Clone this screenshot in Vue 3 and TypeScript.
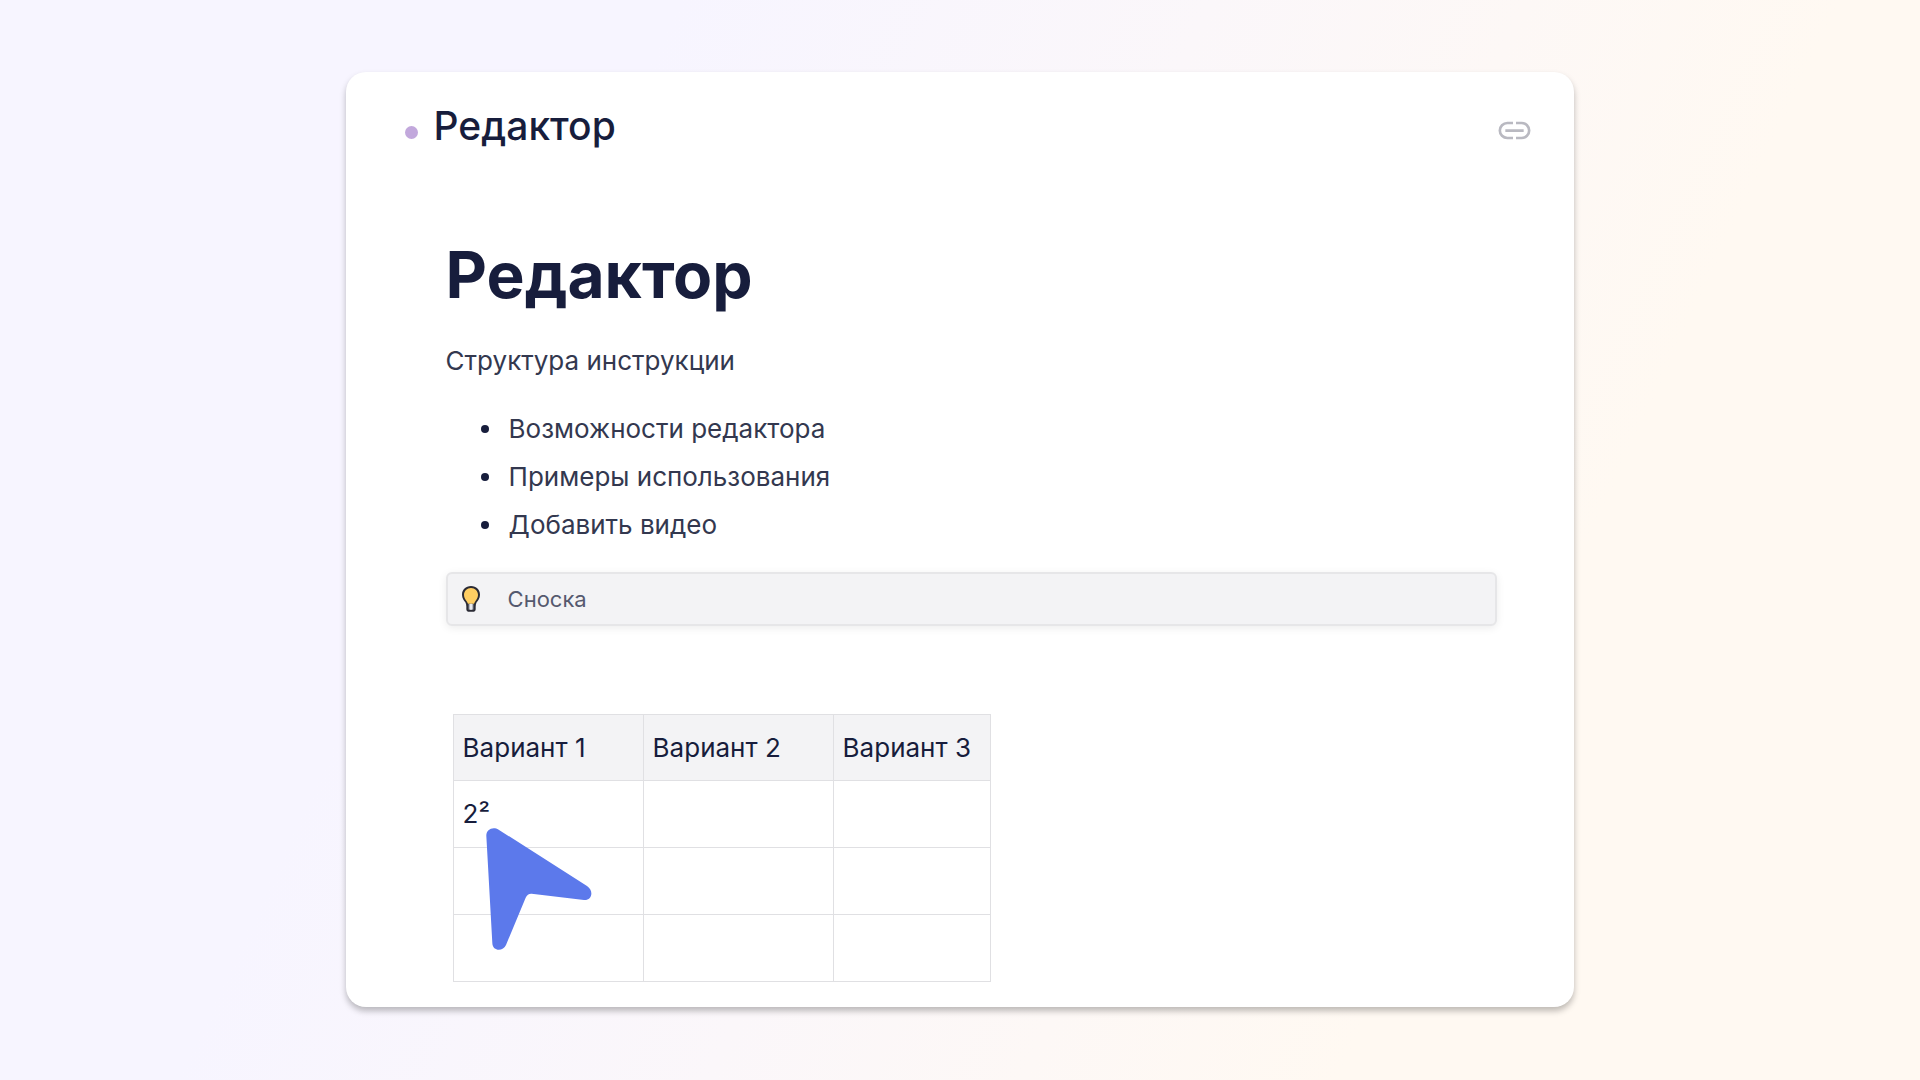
<script setup lang="ts">
interface Row {
  id: number
  cells: string[]
}

const features: string[] = ['Возможности редактора', 'Примеры использования', 'Добавить видео']
const columns: string[] = ['Вариант 1', 'Вариант 2', 'Вариант 3']
const rows: Row[] = [
  { id: 1, cells: ['2²', '', ''] },
  { id: 2, cells: ['', '', ''] },
  { id: 3, cells: ['', '', ''] },
]
</script>

<template>
  <main class="page">
    <article class="card">
      <header class="card-header">
        <span class="dot"></span>
        <h2 class="card-title">Редактор</h2>
        <button class="link-button" type="button" aria-label="Ссылка">
          <svg width="33" height="19" viewBox="234 183 99 57" fill="none" stroke="#b9b9c1" stroke-width="8">
            <path d="M279 189H262a22 22 0 0 0 0 45H279M288 189H305a22 22 0 0 1 0 45H288M256 212H311" />
          </svg>
        </button>
      </header>

      <div class="content">
        <h1 class="heading">Редактор</h1>
        <p class="lead">Структура инструкции</p>
        <ul class="features">
          <li v-for="item in features" :key="item">{{ item }}</li>
        </ul>

        <aside class="note">
          <svg class="bulb" width="20" height="28" viewBox="93 92 60 84">
            <path
              d="M123 95c-16 0-27 11-27 26 0 11 6 17 10 23 2 4 3 8 3 13v8c0 4 3 7 6 7h16c3 0 6-3 6-7v-8c0-5 1-9 3-13 4-6 10-12 10-23 0-15-11-26-27-26z"
              fill="#2b2b35"
            />
            <path
              d="M123 101c-12 0-21 9-21 21 0 9 5 14 9 20 1 2 2 4 3 6h18c1-2 2-4 3-6 4-6 9-11 9-20 0-12-9-21-21-21z"
              fill="#ffce62"
            />
            <path d="M116 149h14v17h-14z" fill="#b4b7c0" />
            <path d="M123 148v18" stroke="#f4f4f6" stroke-width="5" />
          </svg>
          <span>Сноска</span>
        </aside>

        <table class="grid">
          <thead>
            <tr>
              <th v-for="column in columns" :key="column" scope="col">{{ column }}</th>
            </tr>
          </thead>
          <tbody>
            <tr v-for="row in rows" :key="row.id">
              <td v-for="(cell, index) in row.cells" :key="index">
                {{ cell }}
                <svg v-if="cell" class="pointer" width="106" height="122" viewBox="137 384 318 366">
                  <path
                    d="M138 408C137 388 158 378 175 389L440 558C463 574 453 602 431 600L274 581Q262 580 256 593L197 735C189 755 157 755 156 730Z"
                    fill="#5c79eb"
                  />
                </svg>
              </td>
            </tr>
          </tbody>
        </table>
      </div>
    </article>
  </main>
</template>

<style>
body {
  margin: 0;
}
</style>

<style scoped>
.page {
  box-sizing: border-box;
  min-height: 100vh;
  padding: 72px 0;
  display: flex;
  justify-content: center;
  align-items: flex-start;
  background: linear-gradient(115deg, #f7f5ff 28%, #fbf7fa 50%, #fff9f2 76%);
  color: #171d3c;
  font-family: Inter, "Noto Sans", sans-serif;
  font-size: 26px;
  line-height: 40px;
}

.card {
  box-sizing: border-box;
  width: 64%;
  padding: 30px 0 25px;
  border-radius: 20px;
  background: #fff;
  box-shadow: 0 4px 6px rgba(0, 0, 0, 0.26);
}

.card-header {
  display: flex;
  align-items: center;
  padding: 0 43px 0 59px;
}

.dot {
  width: 13px;
  height: 13px;
  margin: 12px 16px 0 0;
  border-radius: 50%;
  background: #c2a8dc;
}

.card-title {
  margin: 0;
  font-size: 39px;
  font-weight: 500;
  line-height: 48px;
}

.link-button {
  display: flex;
  margin: 8px 0 0 auto;
  padding: 0;
  border: 0;
  background: none;
  cursor: pointer;
}

.content {
  padding: 85px 77px 0 100px;
}

.heading {
  margin: 0 0 26px;
  font-size: 64px;
  font-weight: 700;
  line-height: 80px;
}

.lead {
  margin: 0 0 28px;
  color: #33384f;
}

.features {
  display: flex;
  flex-direction: column;
  gap: 8px;
  margin: 0 0 27px;
  padding: 0 0 0 35px;
  list-style: none;
  color: #33384f;
}

.features li {
  display: flex;
  align-items: center;
  gap: 20px;
}

.features li::before {
  content: "";
  width: 8px;
  height: 8px;
  border-radius: 50%;
  background: #171d3c;
}

.note {
  display: flex;
  align-items: center;
  gap: 27px;
  margin-bottom: 88px;
  padding: 5px 13px;
  border: 2px solid #e6e6e8;
  border-radius: 6px;
  background: #f3f3f5;
  box-shadow: 0 2px 8px rgba(0, 0, 0, 0.08);
  color: #55596e;
  font-size: 22px;
}

.grid {
  margin-left: 7px;
  border-collapse: collapse;
}

.grid th,
.grid td {
  position: relative;
  box-sizing: border-box;
  width: 190px;
  height: 67px;
  padding: 0 9px;
  border: 1px solid #e0e0e3;
  text-align: left;
  font-weight: 400;
}

.grid th {
  height: 66px;
  background: #f3f3f5;
}

.grid th:last-child,
.grid td:last-child {
  width: 157px;
}

.pointer {
  position: absolute;
  top: 47px;
  left: 32px;
  z-index: 1;
}
</style>
